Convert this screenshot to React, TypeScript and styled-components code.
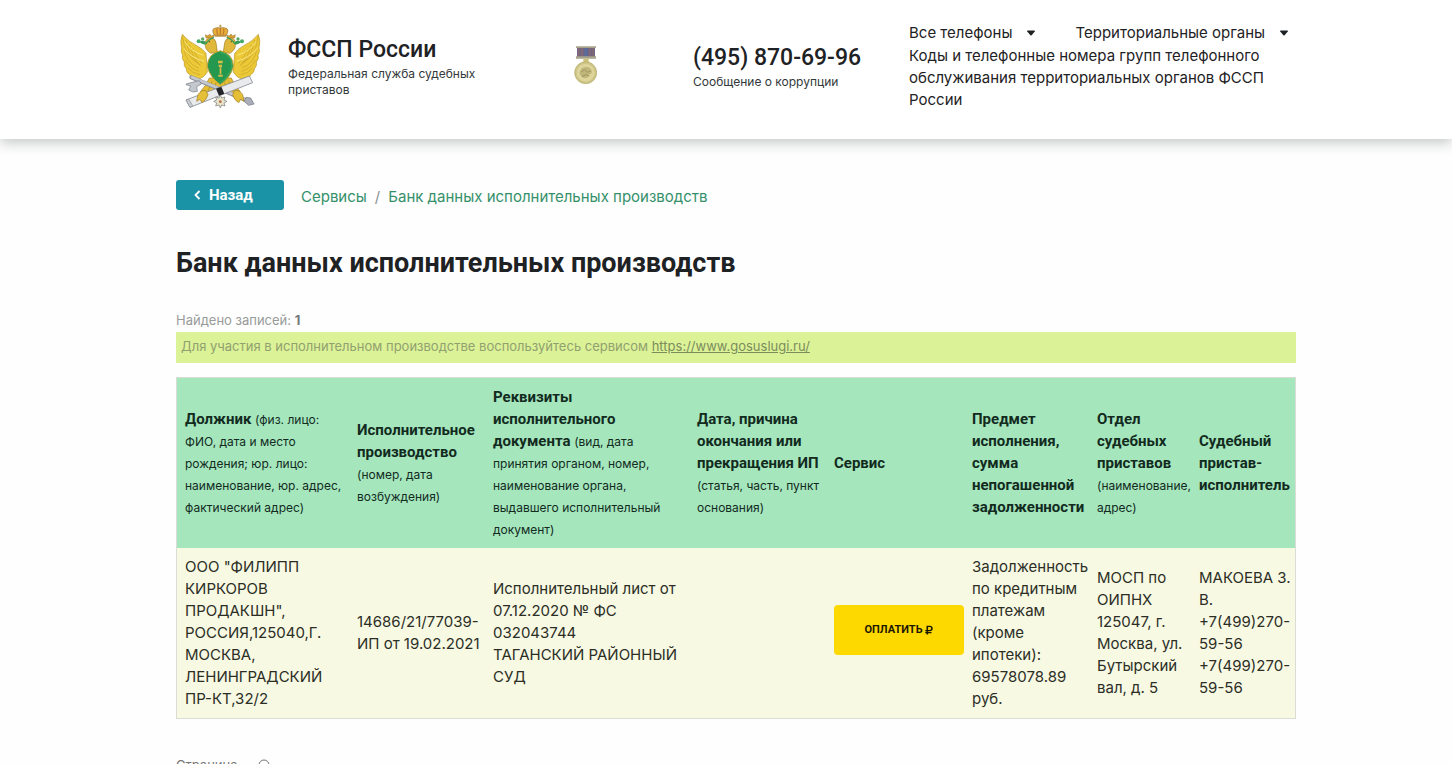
import React from "react";
import styled, { createGlobalStyle } from "styled-components";
import { FaRubleSign } from "react-icons/fa";

const text = `Inter, "Liberation Sans", sans-serif`;
const display = `Roboto, "Liberation Sans", sans-serif`;

const GlobalStyle = createGlobalStyle`
  *, *::before, *::after { box-sizing: border-box; }
  body {
    margin: 0;
    background: #fefefe;
    color: #1e2224;
    font-family: ${text};
    font-size: 15px;
    line-height: 22px;
  }
  button { font: inherit; color: inherit; border: 0; padding: 0; background: none; cursor: pointer; }
  p, h1 { margin: 0; }
`;

const Container = styled.div`
  max-width: 1140px;
  margin: 0 auto;
  padding-left: 20px;
`;

const Header = styled.header`
  background: #fff;
  padding: 22px 0 28px;
  box-shadow: 0 4px 12px rgba(20, 30, 30, 0.24);
`;

const HeaderGrid = styled.div`
  display: grid;
  grid-template-columns: 112px 286fr 119fr 216fr 387fr;
`;

const EmblemSlot = styled.div`
  padding-top: 2px;

  svg { display: block; }
`;

const Brand = styled.div`
  padding-top: 12px;
  max-width: 210px;
`;

const Phone = styled.div`
  padding-top: 20px;
`;

const BigText = styled.div`
  font-family: ${display};
  font-size: 23px;
  font-weight: 500;
  line-height: 32px;
`;

const Caption = styled.div`
  font-size: 12px;
  line-height: 16px;
  color: #33383a;
`;

const MedalSlot = styled.div`
  padding-top: 23px;
`;

const Menus = styled.nav`
  display: flex;
  flex-wrap: wrap;
  gap: 0 40px;
  margin-bottom: 1px;
`;

const MenuButton = styled.button`
  display: flex;
  align-items: center;
  gap: 15px;
`;

const Main = styled.main`
  padding-top: 41px;
`;

const TopRow = styled.div`
  display: flex;
  align-items: center;
  gap: 17px;
`;

const BackButton = styled.button`
  display: flex;
  align-items: center;
  gap: 8px;
  width: 108px;
  height: 30px;
  padding-left: 18px;
  border-radius: 3px;
  background: #1b93a6;
  color: #fff;
  font-family: ${display};
  font-weight: 700;
`;

const Crumbs = styled.nav`
  display: flex;
  gap: 8px;
  padding-top: 4px;
  color: #8a9290;
`;

const CrumbLink = styled.a`
  color: #35906a;
  text-decoration: none;
`;

const Title = styled.h1`
  margin-top: 36px;
  font-family: ${display};
  font-size: 27px;
  font-weight: 700;
  line-height: 34px;
`;

const Found = styled.p`
  margin-top: 32px;
  font-size: 13px;
  line-height: 16px;
  color: #979b99;

  strong { color: #77797a; }
`;

const Notice = styled.p`
  margin: 4px 0 14px;
  padding: 5px 5px 8px;
  background: #dbf297;
  font-size: 13px;
  line-height: 18px;
  color: #91a070;

  a { color: #7c8d5c; }
`;

const Table = styled.table`
  width: 100%;
  table-layout: fixed;
  border: 1px solid #d9ddd6;
  border-spacing: 0;
`;

const HeadCell = styled.th`
  padding: 8px 0 8px 8px;
  background: #a5e6bd;
  color: #122b1e;
  text-align: left;
  vertical-align: middle;
  font-family: ${display};
  font-size: 15px;
  font-weight: 700;

  small {
    font-family: ${text};
    font-size: 12px;
    font-weight: 400;
    line-height: 12px;
  }
`;

const Cell = styled.td`
  padding: 8px 0 8px 8px;
  background: #f7f9e3;
  color: #2c2e26;
  vertical-align: middle;
`;

const PayButton = styled.button`
  display: flex;
  align-items: center;
  justify-content: center;
  gap: 1px;
  width: 100%;
  height: 50px;
  margin-bottom: 6px;
  border-radius: 4px;
  background: #fdd900;
  color: #1d1800;
  font-family: ${display};
  font-size: 11px;
  font-weight: 700;
`;

const Footnote = styled.div`
  display: flex;
  align-items: center;
  gap: 20px;
  margin-top: 37px;
  font-size: 13px;
  line-height: 18px;
  color: #777;
`;

const Caret = () => (
  <svg width="8" height="6" viewBox="0 0 8 6" aria-hidden="true">
    <path d="M0.8 0.6h6.4q.8 0 .6 1L4.6 5.2q-.6.5-1.2 0L.2 1.6Q0 .6.8.6z" fill="#1e2224" />
  </svg>
);

const wingFeathers = [
  "M82 140Q44 120 38 62",
  "M88 146Q56 122 48 72",
  "M92 150Q68 124 58 86",
  "M96 142Q76 118 68 98",
  "M86 156Q52 144 42 104",
  "M88 166Q58 158 46 132",
  "M90 176Q66 172 54 156",
];

const Wing = () => (
  <g>
    <path
      d="M37 55Q56 78 82 90Q100 100 108 112L112 168Q98 190 82 188Q62 188 60 176Q48 170 49 158Q40 150 43 138Q34 128 38 118Q31 106 35 96Q29 76 37 55z"
      fill="#ecc936"
      stroke="#b8952c"
      strokeWidth="2"
    />
    {wingFeathers.map((d) => (
      <path key={d} d={d} fill="none" stroke="#c9a12a" strokeWidth="2" />
    ))}
    <path d="M44 76Q62 106 100 118M42 98Q60 124 102 136" fill="none" stroke="#f9e884" strokeWidth="3" />
    <path d="M122 112Q104 100 106 84Q104 66 124 66Q136 68 138 80L142 108z" fill="#dfb83c" stroke="#a17d22" strokeWidth="2" />
    <path d="M108 78Q98 70 88 78Q94 84 106 86z" fill="#3c9a5c" />
    <circle cx="86" cy="76" r="6" fill="#46a866" />
    <circle cx="98" cy="69" r="5" fill="#5aa566" />
    <path d="M108 66l-2-10 8 4 5-6 5 6 8-3-3 10z" fill="#d89f32" stroke="#9a742a" strokeWidth="1.5" />
    <circle cx="118" cy="77" r="2" fill="#6b4a18" />
  </g>
);

const Emblem = () => (
  <svg width="88" height="86" viewBox="18 24 264 258" role="img" aria-label="Эмблема ФССП России">
    <Wing />
    <g transform="translate(302 0) scale(-1 1)">
      <Wing />
    </g>
    <path d="M133 58Q122 38 137 36Q144 33 151 37Q158 33 165 36Q180 38 169 58z" fill="#e6ad38" stroke="#94672a" strokeWidth="2" />
    <path d="M151 38v18M141 39q-2 8 2 17M161 39q2 8-2 17" stroke="#a54f2c" strokeWidth="2" fill="none" />
    <path d="M151 26v10M147 30h8" stroke="#ae842c" strokeWidth="2.5" />
    <path d="M134 60h34" stroke="#b98632" strokeWidth="4" />
    <path d="M132 64Q112 72 108 84M170 64Q190 72 194 84" fill="none" stroke="#3b9b5b" strokeWidth="4" />
    <path d="M118 186Q108 210 92 226L104 248L140 218L151 238L162 218L198 248L210 226Q194 210 184 186z" fill="#e4bd35" stroke="#a3812c" strokeWidth="2" />
    <path d="M126 196l-12 30M138 200l-6 22M176 196l12 30M164 200l6 22" stroke="#a3812c" strokeWidth="2" />
    <path d="M64 184L242 258" stroke="#8b8f99" strokeWidth="12" strokeLinecap="round" />
    <path d="M66 184L240 256" stroke="#c4c8cf" strokeWidth="8" strokeLinecap="round" />
    <path d="M48 204l30-8 10-2 6 10-14 8 2 14q-14 6-26-4l6-12-14-4z" fill="#c3c8ce" stroke="#777c86" strokeWidth="2" />
    <path d="M228 244l14 2 10 18-16 4-14-12z" fill="#aaaeb8" stroke="#6e727c" strokeWidth="2" />
    <path d="M48 252L238 180L248 200L60 274z" fill="#e8eaec" stroke="#868b92" strokeWidth="2.5" />
    <path d="M48 252l8-3 12 20-8 5z" fill="#c9cdd2" stroke="#868b92" strokeWidth="2" />
    <path d="M138 218l16-6 9 21-16 6z" fill="#23262a" />
    <path d="M84 236q10-16 24-12l6 12q-4 16-18 24l-6-10-10 6zM218 236q-10-16-24-12l-6 12q4 16 18 24l6-10 10 6z" fill="#e5bf37" stroke="#9f7b26" strokeWidth="2" />
    <path d="M151 238l4 8 10-3-3 9 9 4-9 5 3 9-10-3-4 9-4-9-10 3 3-9-9-5 9-4-3-9 10 3z" fill="#e7e3cc" stroke="#777" strokeWidth="2" />
    <circle cx="151" cy="257" r="4" fill="#b86b3e" />
    <path d="M151 104Q190 114 190 152Q182 184 151 206Q120 184 112 152Q112 114 151 104z" fill="#24984f" stroke="#c8a52d" strokeWidth="3" />
    <path d="M151 108Q185 118 186 150Q178 180 151 201" fill="none" stroke="#3dac64" strokeWidth="3" />
    <path d="M144 134h14v8h-14zM146 146h10v7h-10zM149 154h5v20h-5zM145 176h13v6h-13z" fill="#d7bd48" />
  </svg>
);

const Medal = () => (
  <svg width="24" height="40" viewBox="42 32 72 120" role="img" aria-label="Медаль">
    <path d="M51 38h54v30H51z" fill="#6f6482" />
    <path d="M56 40v26M66 40v26M90 40v26M100 40v26" stroke="#8a6a72" strokeWidth="4" />
    <path d="M73 40h10v26H73z" fill="#5a6c9c" />
    <path d="M48 36h60v5H48zM48 66h60v7H48z" fill="#a8a48c" />
    <path d="M70 73h16v12H70z" fill="#cfc27a" />
    <circle cx="77" cy="115" r="33" fill="#cdc382" stroke="#b3aa70" strokeWidth="2" />
    <circle cx="77" cy="115" r="27" fill="#ddd59c" />
    <path d="M58 116q6-20 20-18 14-2 18 14-2 10-10 8 2 10-10 12-12 0-18-16z" fill="#c0b67a" />
    <path d="M64 112l10-6 8 8 10-4M66 126l12-5 10 4" stroke="#9d9462" strokeWidth="3" fill="none" />
  </svg>
);

const columns = [172, 136, 204, 137, 138, 125, 102, 104];

export default function App() {
  return (
    <>
      <GlobalStyle />
      <Header>
        <Container>
          <HeaderGrid>
            <EmblemSlot>
              <Emblem />
            </EmblemSlot>
            <Brand>
              <BigText>ФССП России</BigText>
              <Caption>Федеральная служба судебных приставов</Caption>
            </Brand>
            <MedalSlot>
              <Medal />
            </MedalSlot>
            <Phone>
              <BigText>(495) 870-69-96</BigText>
              <Caption>Сообщение о коррупции</Caption>
            </Phone>
            <div>
              <Menus>
                <MenuButton type="button">
                  Все телефоны <Caret />
                </MenuButton>
                <MenuButton type="button">
                  Территориальные органы <Caret />
                </MenuButton>
              </Menus>
              <p>Коды и телефонные номера групп телефонного обслуживания территориальных органов ФССП России</p>
            </div>
          </HeaderGrid>
        </Container>
      </Header>

      <Container>
        <Main>
          <TopRow>
            <BackButton type="button">
              <svg width="7" height="10" viewBox="0 0 7 10" aria-hidden="true">
                <path d="M5.5 1L1.5 5l4 4" fill="none" stroke="#fff" strokeWidth="1.8" />
              </svg>
              Назад
            </BackButton>
            <Crumbs aria-label="Навигация">
              <CrumbLink href="#services">Сервисы</CrumbLink>
              <span>/</span>
              <CrumbLink href="#bank">Банк данных исполнительных производств</CrumbLink>
            </Crumbs>
          </TopRow>

          <Title>Банк данных исполнительных производств</Title>

          <Found>
            Найдено записей: <strong>1</strong>
          </Found>
          <Notice>
            Для участия в исполнительном производстве воспользуйтесь сервисом{" "}
            <a href="#gosuslugi">https://www.gosuslugi.ru/</a>
          </Notice>

          <Table>
            <colgroup>
              {columns.map((width, i) => (
                <col key={i} width={width} />
              ))}
            </colgroup>
            <thead>
              <tr>
                <HeadCell scope="col">
                  Должник{" "}
                  <small>(физ. лицо: ФИО, дата и место рождения; юр. лицо: наименование, юр. адрес, фактический адрес)</small>
                </HeadCell>
                <HeadCell scope="col">
                  Исполнительное производство <small>(номер, дата возбуждения)</small>
                </HeadCell>
                <HeadCell scope="col">
                  Реквизиты исполнительного документа{" "}
                  <small>(вид, дата принятия органом, номер, наименование органа, выдавшего исполнительный документ)</small>
                </HeadCell>
                <HeadCell scope="col">
                  Дата, причина окончания или прекращения ИП <small>(статья, часть, пункт основания)</small>
                </HeadCell>
                <HeadCell scope="col">Сервис</HeadCell>
                <HeadCell scope="col">Предмет исполнения, сумма непогашенной задолженности</HeadCell>
                <HeadCell scope="col">
                  Отдел судебных приставов <small>(наименование, адрес)</small>
                </HeadCell>
                <HeadCell scope="col">Судебный пристав-исполнитель</HeadCell>
              </tr>
            </thead>
            <tbody>
              <tr>
                <Cell>
                  ООО "ФИЛИПП КИРКОРОВ ПРОДАКШН",
                  <br />
                  РОССИЯ,125040,Г. МОСКВА, ЛЕНИНГРАДСКИЙ ПР-КТ,32/2
                </Cell>
                <Cell>14686/21/77039-ИП от 19.02.2021</Cell>
                <Cell>
                  Исполнительный лист от 07.12.2020 № ФС 032043744
                  <br />
                  ТАГАНСКИЙ РАЙОННЫЙ СУД
                </Cell>
                <Cell />
                <Cell>
                  <PayButton type="button">
                    ОПЛАТИТЬ <FaRubleSign size={10} aria-hidden="true" />
                  </PayButton>
                </Cell>
                <Cell>Задолженность по кредитным платежам (кроме ипотеки): 69578078.89 руб.</Cell>
                <Cell>МОСП по ОИПНХ 125047, г. Москва, ул. Бутырский вал, д. 5</Cell>
                <Cell>
                  МАКОЕВА З. В.
                  <br />
                  +7(499)270-59-56
                  <br />
                  +7(499)270-59-56
                </Cell>
              </tr>
            </tbody>
          </Table>

          <Footnote>
            Страница
            <svg width="12" height="12" viewBox="0 0 12 12" aria-hidden="true">
              <circle cx="6" cy="6" r="5" fill="none" stroke="#777" />
            </svg>
          </Footnote>
        </Main>
      </Container>
    </>
  );
}
